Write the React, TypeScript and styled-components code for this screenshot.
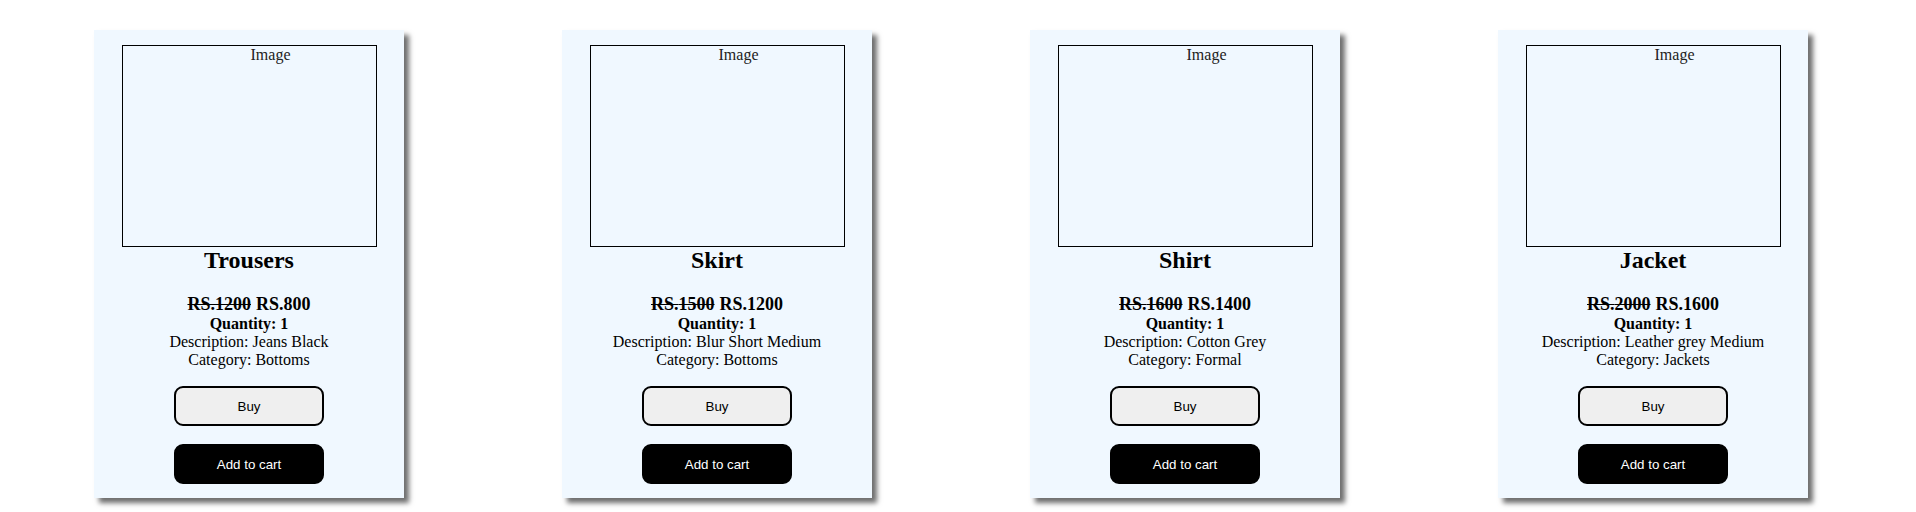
import styled, { createGlobalStyle } from 'styled-components';

const GlobalStyle = createGlobalStyle`
  html {
    overflow-y: scroll;
  }

  html::-webkit-scrollbar {
    width: 15px;
  }

  html::-webkit-scrollbar-track {
    background: #f1f1f1;
  }

  html::-webkit-scrollbar-thumb {
    background: #c1c1c1;
    border-left: 4px solid #f1f1f1;
  }

  html::-webkit-scrollbar-button:single-button:vertical:increment {
    height: 15px;
    background: #f1f1f1;
  }

  body {
    margin: 0;
    background: #ffffff;
    font-family: 'Liberation Serif', 'Times New Roman', serif;
    color: #000000;
  }
`;

//#region styled
const Page = styled.main`
  display: flex;
  align-items: flex-start;
  gap: 158px;
  padding: 30px 0 16px 94px;
`;

const Card = styled.article`
  box-sizing: border-box;
  display: flex;
  flex-direction: column;
  align-items: center;
  flex: 0 0 auto;
  width: 310px;
  height: 468px;
  padding-top: 15px;
  background: #f0f8ff;
  box-shadow: 5px 5px 5px #6e6e6e;
  text-align: center;
`;

const ImageBox = styled.div`
  box-sizing: border-box;
  width: 255px;
  height: 202px;
  padding-left: 43px;
  border: 1px solid #000000;
  font-size: 16px;
  line-height: 18px;
  color: #222222;
`;

const Title = styled.h2`
  margin: 0 0 20px;
  font-size: 24px;
  font-weight: bold;
`;

const Price = styled.p`
  margin: 0;
  font-size: 18px;
  font-weight: bold;

  s {
    margin-right: 5px;
  }
`;

const Quantity = styled.p`
  margin: 0;
  font-size: 16px;
  font-weight: bold;
`;

const Detail = styled.p`
  margin: 0;
  font-size: 16px;
`;

const Actions = styled.div`
  display: flex;
  flex-direction: column;
  gap: 18px;
  margin-top: 17px;
`;

const Button = styled.button<{ $dark?: boolean }>`
  box-sizing: border-box;
  width: 150px;
  height: 40px;
  border: 2px solid #000000;
  border-radius: 9px;
  background: ${({ $dark }) => ($dark ? '#000000' : '#efefef')};
  color: ${({ $dark }) => ($dark ? '#ffffff' : '#000000')};
  font-family: 'Liberation Sans', Arial, sans-serif;
  font-size: 13.333px;
  cursor: pointer;
`;
//#endregion

interface Product {
  name: string;
  oldPrice: number;
  price: number;
  quantity: number;
  description: string;
  category: string;
}

const products: Product[] = [
  { name: 'Trousers', oldPrice: 1200, price: 800, quantity: 1, description: 'Jeans Black', category: 'Bottoms' },
  { name: 'Skirt', oldPrice: 1500, price: 1200, quantity: 1, description: 'Blur Short Medium', category: 'Bottoms' },
  { name: 'Shirt', oldPrice: 1600, price: 1400, quantity: 1, description: 'Cotton Grey', category: 'Formal' },
  { name: 'Jacket', oldPrice: 2000, price: 1600, quantity: 1, description: 'Leather grey Medium', category: 'Jackets' },
];

const ProductCard = ({ product }: { product: Product }) => (
  <Card>
    <ImageBox>Image</ImageBox>
    <Title>{product.name}</Title>
    <Price>
      <s>RS.{product.oldPrice}</s>
      RS.{product.price}
    </Price>
    <Quantity>Quantity: {product.quantity}</Quantity>
    <Detail>Description: {product.description}</Detail>
    <Detail>Category: {product.category}</Detail>
    <Actions>
      <Button>Buy</Button>
      <Button $dark>Add to cart</Button>
    </Actions>
  </Card>
);

const App = () => {
  return (
    <>
      <GlobalStyle />
      <Page>
        {products.map((product) => (
          <ProductCard key={product.name} product={product} />
        ))}
      </Page>
    </>
  );
};

export default App;
